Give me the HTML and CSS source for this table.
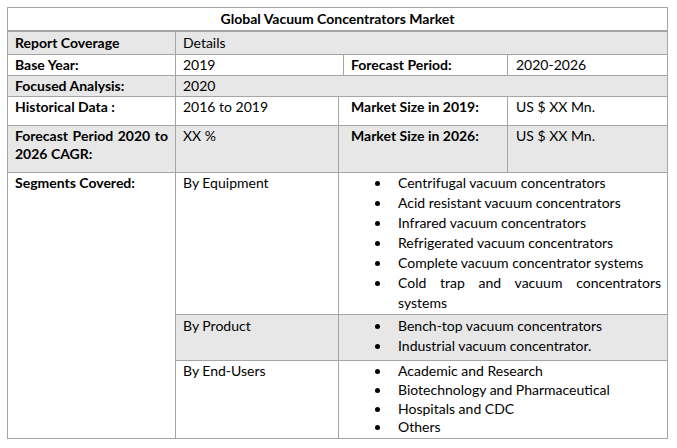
FILE: index.html
```html
<!DOCTYPE html>
<html lang="en">
<head>
<meta charset="utf-8">
<title>Global Vacuum Concentrators Market</title>
<link rel="stylesheet" href="styles.css">
</head>
<body>
<table class="market">
  <colgroup>
    <col class="c-a"><col class="c-b"><col class="c-c"><col class="c-d"><col class="c-e">
  </colgroup>
  <tr class="r-title">
    <td colspan="5">Global Vacuum Concentrators Market</td>
  </tr>
  <tr class="r-cov shade">
    <td class="lbl">Report Coverage</td>
    <td colspan="4">Details</td>
  </tr>
  <tr class="r-base">
    <td class="lbl">Base Year:</td>
    <td colspan="2">2019</td>
    <td class="lbl lbl-d">Forecast Period:</td>
    <td class="val-e">2020-2026</td>
  </tr>
  <tr class="r-focus shade">
    <td class="lbl">Focused Analysis:</td>
    <td colspan="4">2020</td>
  </tr>
  <tr class="r-hist">
    <td class="lbl">Historical Data :</td>
    <td>2016 to 2019</td>
    <td colspan="2" class="lbl lbl-cd">Market Size in 2019:</td>
    <td class="val-e">US $ XX Mn.</td>
  </tr>
  <tr class="r-cagr shade">
    <td class="lbl"><span class="jl">Forecast Period 2020 to</span>2026 CAGR:</td>
    <td>XX %</td>
    <td colspan="2" class="lbl lbl-cd">Market Size in 2026:</td>
    <td class="val-e">US $ XX Mn.</td>
  </tr>
  <tr class="r-equip">
    <td class="lbl seg" rowspan="3">Segments Covered:</td>
    <td>By Equipment</td>
    <td colspan="3" class="list">
      <ul>
        <li><span class="txt">Centrifugal vacuum concentrators</span></li>
        <li><span class="txt">Acid resistant vacuum concentrators</span></li>
        <li><span class="txt">Infrared vacuum concentrators</span></li>
        <li><span class="txt">Refrigerated vacuum concentrators</span></li>
        <li><span class="txt">Complete vacuum concentrator systems</span></li>
        <li><span class="txt"><span class="jl">Cold trap and vacuum concentrators</span>systems</span></li>
      </ul>
    </td>
  </tr>
  <tr class="r-prod">
    <td class="shade-cell">By Product</td>
    <td colspan="3" class="list shade-cell">
      <ul>
        <li><span class="txt">Bench-top vacuum concentrators</span></li>
        <li><span class="txt">Industrial vacuum concentrator.</span></li>
      </ul>
    </td>
  </tr>
  <tr class="r-end">
    <td>By End-Users</td>
    <td colspan="3" class="list">
      <ul>
        <li><span class="txt">Academic and Research</span></li>
        <li><span class="txt">Biotechnology and Pharmaceutical</span></li>
        <li><span class="txt">Hospitals and CDC</span></li>
        <li><span class="txt">Others</span></li>
      </ul>
    </td>
  </tr>
</table>
</body>
</html>
```

FILE: styles.css
```css
body {
  margin: 7px;
  background: #ffffff;
  color: #000000;
  font-family: Lato, "Liberation Sans", sans-serif;
  font-size: 14px;
}

.market {
  border-collapse: separate;
  border-spacing: 0;
  table-layout: fixed;
  width: 661px;
  border-top: 1px solid #a5a5a5;
  border-left: 1px solid #a5a5a5;
}

.c-a { width: 168px; }
.c-b { width: 163px; }
.c-c { width: 5px; }
.c-d { width: 164px; }
.c-e { width: 160px; }

.market td {
  border-right: 1px solid #a5a5a5;
  border-bottom: 1px solid #a5a5a5;
  padding: 0 7px;
  vertical-align: top;
  line-height: 20px;
  white-space: nowrap;
  overflow: hidden;
}

.lbl { font-weight: 700; }
.lbl-d { padding-left: 7px; }
.market td.lbl-cd { padding-left: 12px; }
.market td.val-e { padding-left: 8px; }

.shade td,
.market td.shade-cell { background: #e7e7e7; }

.r-title td {
  text-align: center;
  font-weight: 700;
  padding-top: 1px;
  padding-bottom: 1px;
  border-bottom-width: 2px;
}

.market .r-cov td { padding-top: 1px; padding-bottom: 1px; }
.market .r-hist td { padding-bottom: 8px; }
.market .r-cagr td { line-height: 18px; padding-top: 1px; padding-bottom: 9px; }
.market .r-equip td { padding-bottom: 1px; }
.market .r-prod td { padding-top: 1px; padding-bottom: 4px; }
.market .r-end td { line-height: 18.75px; padding-top: 1px; padding-bottom: 1px; }
.market td.seg { padding-top: 0; padding-bottom: 0; }

.jl {
  display: block;
  white-space: normal;
  text-align: justify;
  text-align-last: justify;
}

.market td.list {
  padding-left: 36px;
  padding-right: 6px;
}

.list ul {
  margin: 0;
  padding: 0;
  list-style: none;
}

.list li {
  display: flex;
  align-items: flex-start;
}

.list li::before {
  content: "";
  flex: none;
  width: 5px;
  height: 5px;
  border-radius: 50%;
  background: #000000;
  margin-top: 8px;
  margin-right: 18px;
}

.r-end .list li::before { margin-top: 7px; }

.txt {
  flex: 1;
  min-width: 0;
}
```
